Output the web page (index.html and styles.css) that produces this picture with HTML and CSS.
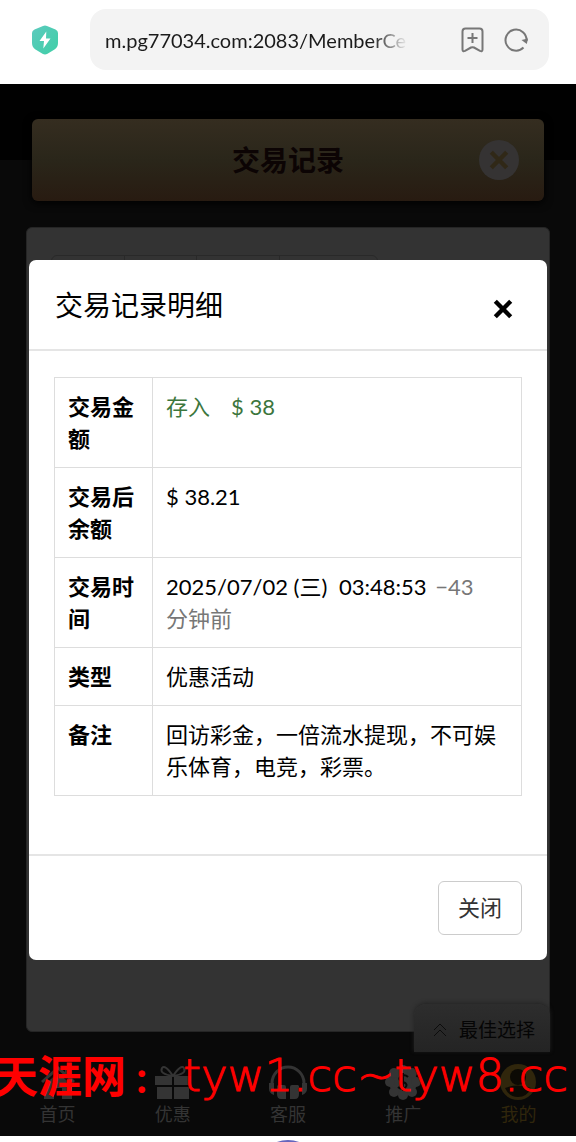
FILE: index.html
```html
<!DOCTYPE html>
<html lang="zh-CN">
<head>
<meta charset="utf-8">
<meta name="viewport" content="width=device-width, initial-scale=1">
<title>交易记录</title>
<link rel="stylesheet" href="styles.css">
</head>
<body>
<header class="browser-bar">
  <svg class="shield" viewBox="0 0 26 30" aria-hidden="true">
    <defs><linearGradient id="mint" x1="0" y1="0" x2="1" y2="1"><stop offset="0" stop-color="#5ccabe"/><stop offset="1" stop-color="#3fcfa6"/></linearGradient></defs>
    <path d="M11 1.1Q13 0 15 1.1L23.500 4.500Q26 5.500 26 8V18Q26 22 22.500 24.500L15.500 28.800Q13 30.300 10.500 28.800L3.500 24.500Q0 22 0 18V8Q0 5.500 2.500 4.500Z" fill="url(#mint)"/>
    <path d="M14.300 6.500L7.500 16H12L11.300 23.500L18.500 13.500H14Z" fill="#fff"/>
  </svg>
  <div class="address">
    <input class="url" type="text" aria-label="网址" value="m.pg77034.com:2083/MemberCe">
    <button class="bar-button" type="button" aria-label="添加书签">
      <svg viewBox="0 0 26 26" aria-hidden="true"><path d="M5.500 1.500H19.500Q22.500 1.500 22.500 4.500V22.500Q22.500 25 20 23.800L14 20.500Q12.500 19.800 11 20.500L5 23.800Q2.500 25 2.500 22.500V4.500Q2.500 1.500 5.500 1.500ZM12.500 6V16M7.500 11H17.500"/></svg>
    </button>
    <button class="bar-button" type="button" aria-label="刷新">
      <svg viewBox="0 0 26 26" aria-hidden="true"><path d="M20.500 20.500A10.500 10.500 0 1 1 23.500 14"/><path class="solid" d="M18.500 13L25 11.500L23.800 17Z"/></svg>
    </button>
  </div>
</header>

<main class="page">
  <div class="backdrop-content">
    <div class="title-bar">
      <h1>交易记录</h1>
      <button class="round-close" type="button" aria-label="返回">
        <svg viewBox="0 0 20 20" aria-hidden="true"><path d="M3 3L17 17M17 3L3 17"/></svg>
      </button>
    </div>
    <section class="panel">
      <div class="tabs"><span></span><span></span><span></span><span></span></div>
      <button class="best" type="button">
        <svg viewBox="0 0 16 16" aria-hidden="true"><path d="M2 8L8 2L14 8M2 14L8 8L14 14"/></svg>最佳选择
      </button>
    </section>
    <nav class="nav">
      <a href="#home"><svg viewBox="0 0 40 36" aria-hidden="true"><path d="M20 2L3 17L5 19L20 6L35 19L37 17L32 12V3H27V8ZM6 21L20 9L34 21V35H24V24H16V35H6Z"/></svg>首页</a>
      <a href="#offers"><svg viewBox="0 0 40 36" aria-hidden="true"><path d="M2 12H19V21H2ZM21 12H38V21H21ZM4 23H19V35H4ZM21 23H36V35H21Z"/><path class="line" d="M20 12Q12 0 9 4Q6 10 20 12Q28 0 31 4Q34 10 20 12"/></svg>优惠</a>
      <a href="#service"><svg viewBox="0 0 40 36" aria-hidden="true"><path class="line wide" d="M4 23V19A16 16 0 0 1 36 19V23"/><path d="M10 21H16Q18 21 18 23V35H13Q9 35 9 30V22ZM24 21H30L31 22V30Q31 35 27 35H22V23Q22 21 24 21ZM1 19H6V31Q1 29 1 25ZM34 19H39V25Q39 29 34 31Z"/></svg>客服</a>
      <a href="#promo"><svg viewBox="0 0 40 36" aria-hidden="true"><circle cx="20" cy="18" r="14"/><circle cx="20" cy="6" r="5"/><circle cx="29" cy="9" r="5"/><circle cx="33" cy="18" r="5"/><circle cx="29" cy="28" r="5"/><circle cx="20" cy="31" r="5"/><circle cx="11" cy="28" r="5"/><circle cx="7" cy="18" r="5"/><circle cx="11" cy="9" r="5"/><path class="cut" d="M25 13Q22 10 18 12Q14 16 20 18Q26 20 22 24Q18 26 15 23M20 9V27"/></svg>推广</a>
      <a class="current" href="#mine"><svg viewBox="0 0 40 36" aria-hidden="true"><circle cx="20" cy="18" r="18"/><circle class="cut-fill" cx="20" cy="13" r="8"/><path class="cut-fill" d="M7 24Q20 19 33 24Q29 33 20 33Q11 33 7 24Z"/></svg>我的</a>
    </nav>
  </div>

  <section class="modal" role="dialog" aria-modal="true" aria-labelledby="modal-title">
    <header class="modal-head">
      <h2 id="modal-title">交易记录明细</h2>
      <button class="modal-close" type="button" aria-label="关闭窗口">
        <svg viewBox="0 0 20 20" aria-hidden="true"><path d="M3 3L17 17M17 3L3 17"/></svg>
      </button>
    </header>
    <div class="modal-body">
      <table class="details">
        <tbody>
          <tr><th scope="row">交易金额</th><td class="deposit"><span>存入</span><span>$ 38</span></td></tr>
          <tr><th scope="row">交易后余额</th><td>$ 38.21</td></tr>
          <tr><th scope="row">交易时间</th><td>2025/07/02 <span class="weekday">(三)</span> 03:48:53 <span class="ago">−43 <span class="unit">分钟前</span></span></td></tr>
          <tr><th scope="row">类型</th><td>优惠活动</td></tr>
          <tr><th scope="row">备注</th><td>回访彩金，一倍流水提现，不可娱乐体育，电竞，彩票。</td></tr>
        </tbody>
      </table>
    </div>
    <footer class="modal-foot"><button class="dismiss" type="button">关闭</button></footer>
  </section>

  <p class="watermark"><strong>天涯网</strong><b>:</b><span>tyw1.cc~tyw8.cc</span></p>
</main>
<footer class="device-edge"><span class="device-dot"></span></footer>
</body>
</html>
```
FILE: styles.css
```css
* { box-sizing: border-box; }

body {
  margin: 0;
  min-height: 100vh;
  display: flex;
  flex-direction: column;
  background: #fff;
  color: #000;
  font: 22px/32px Lato, "Noto Sans CJK SC", sans-serif;
  overflow-x: hidden;
}

h1, h2, p { margin: 0; }
button, input { font: inherit; border: 0; padding: 0; background: none; }
svg { display: block; fill: none; stroke: currentColor; }

.browser-bar {
  display: flex;
  align-items: center;
  gap: 32px;
  height: 84px;
  padding: 9px 27px 14px 32px;
}
.shield { width: 26px; height: 30px; stroke: none; flex: none; }
.address {
  flex: 1;
  min-width: 0;
  display: flex;
  align-items: center;
  height: 61px;
  padding: 0 20px 0 15px;
  border-radius: 16px;
  background: #f3f3f3;
}
.url {
  flex: 1;
  min-width: 0;
  margin-right: 52px;
  font-size: 20px;
  color: #1b1b1b;
  mask-image: linear-gradient(90deg, #000 88%, transparent);
}
.bar-button { color: #777; margin-left: 17px; flex: none; }
.url + .bar-button { margin-left: 0; }
.bar-button svg { width: 26px; height: 26px; stroke-width: 2; }
.bar-button .solid { fill: currentColor; stroke: none; }

.page {
  position: relative;
  flex: 1;
  display: flex;
  background: #010101;
}
.backdrop-content {
  flex: 1;
  min-width: 0;
  display: flex;
  flex-direction: column;
  background: linear-gradient(#010101 76px, #090909 76px);
}
.title-bar {
  display: grid;
  grid-template-columns: 1fr auto 1fr;
  align-items: center;
  height: 82px;
  margin: 35px 32px 26px;
  padding: 0 25px;
  border-radius: 6px;
  background: linear-gradient(#352d20, #2a261a 50%, #281b11);
  box-shadow: 0 2px 8px #000;
}
.title-bar h1 {
  grid-column: 2;
  font-size: 28px;
  line-height: 40px;
  font-weight: 700;
  color: #0c0404;
}
.round-close {
  justify-self: end;
  display: grid;
  place-items: center;
  width: 40px;
  height: 40px;
  border-radius: 50%;
  background: #353333;
  color: #302817;
}
.round-close svg, .modal-close svg { width: 22px; height: 22px; stroke-width: 4; }

.panel {
  position: relative;
  flex: 1;
  margin: 0 26px 20px;
  padding: 27px 24px;
  border: 1px solid #252525;
  border-radius: 6px;
  background: #333;
}
.tabs {
  display: grid;
  grid-template-columns: 72fr 72fr 82fr 98fr;
  width: 69%;
  height: 40px;
  border: 1px solid #292929;
  border-radius: 6px;
}
.tabs span + span { border-left: 1px solid #292929; }
.best {
  position: absolute;
  right: -1px;
  bottom: -21px;
  display: flex;
  align-items: center;
  gap: 11px;
  height: 48px;
  padding: 4px 15px 0 18px;
  border-radius: 12px 12px 0 0;
  background: linear-gradient(#2d2d2d, #242424);
  box-shadow: 0 -1px 4px #222;
  color: #050505;
  font-size: 19px;
}
.best svg { width: 16px; height: 16px; stroke: #0c0c0c; stroke-width: 1; }

.nav {
  display: grid;
  grid-template-columns: repeat(5, 1fr);
  height: 84px;
  padding-top: 12px;
  background: #090909;
}
.nav a {
  display: flex;
  flex-direction: column;
  align-items: center;
  gap: 2px;
  color: #343434;
  font-size: 18px;
  line-height: 24px;
  text-decoration: none;
}
.nav .current { color: #30260c; }
.nav svg { width: 40px; height: 36px; fill: currentColor; stroke: none; }
.nav .line { fill: none; stroke: currentColor; stroke-width: 2; }
.nav .wide { stroke-width: 3; }
.nav .cut { fill: none; stroke: #090909; stroke-width: 2; }
.nav .cut-fill { fill: #0c0a04; }

.modal {
  position: absolute;
  top: 176px;
  left: 29px;
  right: 29px;
  border-radius: 7px;
  background: #fff;
}
.modal-head {
  display: flex;
  align-items: center;
  justify-content: space-between;
  height: 91px;
  padding: 0 33px 0 26px;
  border-bottom: 2px solid #e5e5e5;
}
.modal-head h2 { font-size: 28px; line-height: 40px; font-weight: 400; }
.modal-close { margin-top: 8px; color: #000; }
.modal-body { padding: 26px 25px 58px; }

.details { width: 100%; border-collapse: collapse; table-layout: fixed; }
.details th, .details td {
  padding: 13px 13px 12px;
  border: 1px solid #ddd;
  vertical-align: top;
  text-align: left;
  font-weight: 400;
}
.details th { width: 98px; font-weight: 700; }
.deposit { color: #3c763d; }
.deposit span + span { margin-left: 21px; }
.weekday { margin-right: 6px; }
.ago { color: #777; margin-left: 3px; }
.unit { white-space: nowrap; }

.modal-foot {
  display: flex;
  justify-content: flex-end;
  padding: 25px;
  border-top: 2px solid #e5e5e5;
}
.dismiss {
  height: 54px;
  padding: 0 19px;
  border: 1px solid #ccc;
  border-radius: 6px;
  color: #333;
}

.watermark {
  position: absolute;
  right: 8px;
  bottom: 30px;
  display: flex;
  align-items: center;
  white-space: nowrap;
  color: #f00;
  line-height: 60px;
}
.watermark strong { font-size: 44px; font-weight: 700; }
.watermark b { margin: 0 36px 0 10px; font-size: 44px; }
.watermark span {
  font-family: "DejaVu Sans Light", "DejaVu Sans", sans-serif;
  font-size: 45px;
  font-weight: 200;
  -webkit-text-stroke: 1px #f00;
}

.device-edge { display: flex; justify-content: center; height: 6px; overflow: hidden; }
.device-dot { flex: none; width: 64px; height: 64px; margin-top: 4px; border-radius: 50%; background: #6565bd; }
```
